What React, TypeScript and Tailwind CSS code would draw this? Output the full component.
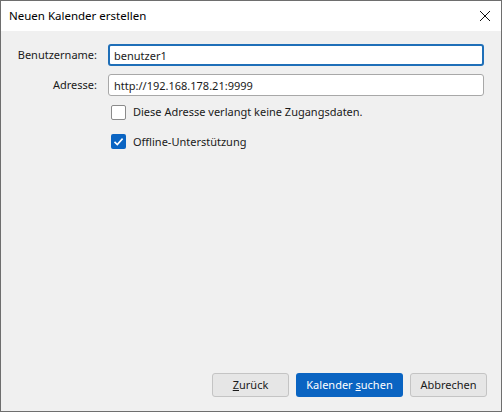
import React from 'react'

const font = { fontFamily: '"Segoe UI", "Noto Sans", "Open Sans", sans-serif' }

export default function App() {
  return (
    <div
      className="w-[502px] h-[412px] flex flex-col border border-[#6e6e6e] bg-[#f0f0f0] text-[11px] text-[#1a1a1a] overflow-hidden"
      style={font}
    >
      {/* title bar */}
      <div className="h-[30px] bg-white flex items-center justify-between pl-[8px] pr-[9px] shrink-0">
        <span className="text-[11.5px] text-black">Neuen Kalender erstellen</span>
        <svg width="12" height="12" viewBox="0 0 12 12" className="mr-[1px]">
          <path d="M1 1 L11 11 M11 1 L1 11" stroke="#111" strokeWidth="1" fill="none" />
        </svg>
      </div>

      {/* body */}
      <div className="flex-1 flex flex-col pt-[13px] pl-[12px] pr-[17px] pb-[14px]">
        <div className="grid grid-cols-[84px_1fr] gap-x-[11px] gap-y-[8px] items-center">
          <label className="text-right">Benutzername:</label>
          <input
            readOnly
            value="benutzer1"
            className="h-[22px] rounded-[3px] border-2 border-[#1f6fb8] bg-white px-[4px] text-[11px] outline-none"
            style={font}
          />
          <label className="text-right">Adresse:</label>
          <input
            readOnly
            value="http://192.168.178.21:9999"
            className="h-[22px] rounded-[3px] border border-[#a8a8a8] bg-white px-[5px] text-[11px] outline-none"
            style={font}
          />
        </div>

        <div className="flex flex-col gap-[13px] mt-[8px] ml-[98px]">
          <div className="flex items-center gap-[7px]">
            <span className="w-[15px] h-[15px] rounded-[2px] border border-[#8a8a8a] bg-white" />
            <span>Diese Adresse verlangt keine Zugangsdaten.</span>
          </div>
          <div className="flex items-center gap-[7px]">
            <span className="w-[15px] h-[15px] rounded-[2px] bg-[#0a64c2] flex items-center justify-center">
              <svg width="11" height="11" viewBox="0 0 11 11">
                <path d="M1.5 5.8 L4.3 8.5 L9.6 2.6" stroke="white" strokeWidth="1.6" fill="none" />
              </svg>
            </span>
            <span>Offline-Unterstützung</span>
          </div>
        </div>

        <div className="flex-1" />

        <div className="flex justify-end gap-[7px] mr-[-3px]">
          <button className="w-[77px] h-[24px] rounded-[3px] border border-[#c4c4c4] bg-[#e6e6e6] text-[11px]" style={font}>
            <u>Z</u>urück
          </button>
          <button className="w-[107px] h-[24px] rounded-[3px] bg-[#0a64c2] text-white text-[11px]" style={font}>
            Kalender <u>s</u>uchen
          </button>
          <button className="w-[77px] h-[24px] rounded-[3px] border border-[#c4c4c4] bg-[#e6e6e6] text-[11px]" style={font}>
            Abbrechen
          </button>
        </div>
      </div>
    </div>
  )
}
